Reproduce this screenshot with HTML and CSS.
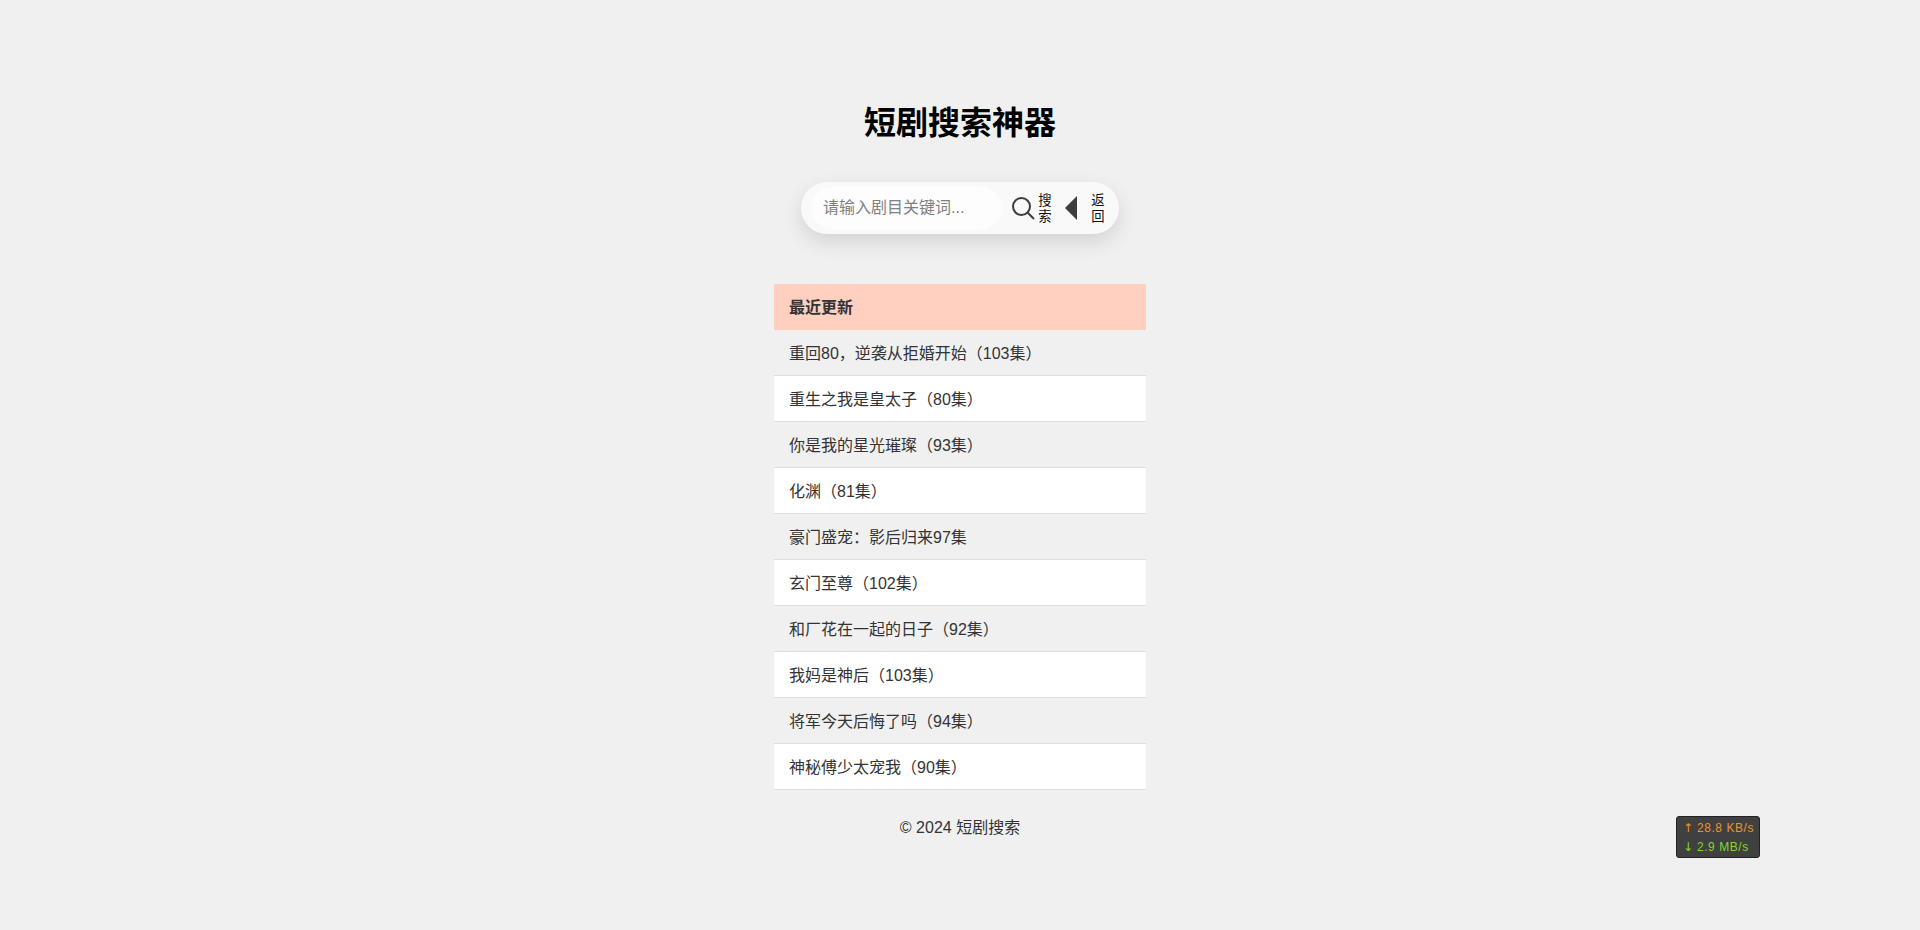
FILE: index.html
```html
<!DOCTYPE html>
<html lang="zh-CN">
<head>
<meta charset="utf-8">
<title>短剧搜索神器</title>
<link rel="stylesheet" href="styles.css">
</head>
<body>
<main class="page">
  <h1 class="title">短剧搜索神器</h1>
  <form class="search">
    <input class="search-input" type="text" placeholder="请输入剧目关键词...">
    <button class="search-btn search-btn-find" type="button">
      <svg class="icon" viewBox="0 0 24 24" width="24" height="24" fill="none" stroke="#3d3d3d" stroke-width="2"><circle cx="10.5" cy="10.5" r="8.5"/><path d="M16.8 16.8 L23 23"/></svg>
      <span class="btn-label">搜索</span>
    </button>
    <button class="search-btn search-btn-back" type="button">
      <svg class="icon" viewBox="0 0 12 24" width="12" height="24"><path d="M12 0 V24 L0 12 Z" fill="#3d3d3d"/></svg>
      <span class="btn-label">返回</span>
    </button>
  </form>
  <section class="list">
    <div class="list-head">最近更新</div>
    <ul class="rows">
      <li class="row">重回80，逆袭从拒婚开始（103集）</li>
      <li class="row">重生之我是皇太子（80集）</li>
      <li class="row">你是我的星光璀璨（93集）</li>
      <li class="row">化渊（81集）</li>
      <li class="row">豪门盛宠：影后归来97集</li>
      <li class="row">玄门至尊（102集）</li>
      <li class="row">和厂花在一起的日子（92集）</li>
      <li class="row">我妈是神后（103集）</li>
      <li class="row">将军今天后悔了吗（94集）</li>
      <li class="row">神秘傅少太宠我（90集）</li>
    </ul>
  </section>
  <footer class="foot">© 2024 短剧搜索</footer>
</main>
<aside class="speed">
  <div class="speed-up"><span class="speed-arrow">↑</span> 28.8 KB/s</div>
  <div class="speed-down"><span class="speed-arrow">↓</span> 2.9 MB/s</div>
</aside>
</body>
</html>
```
FILE: styles.css
```css
* { box-sizing: border-box; }
html, body { margin: 0; height: 100%; }
body {
  background: #f0f0f0;
  color: #333;
  font-family: "Liberation Sans", "Noto Sans CJK SC", sans-serif;
  font-size: 16px;
  overflow: hidden;
}
.page {
  width: 372px;
  margin: 0 auto;
  padding-top: 104px;
  display: flex;
  flex-direction: column;
  align-items: center;
}
.title {
  margin: 0;
  height: 38px;
  line-height: 38px;
  font-size: 32px;
  font-weight: 700;
  color: #000;
}
.search {
  margin-top: 40px;
  width: 318px;
  height: 52px;
  padding: 5px 10px;
  background: #f9f9f9;
  border-radius: 26px;
  box-shadow: 0 8px 20px rgba(0, 0, 0, 0.12);
  display: flex;
  align-items: center;
}
.search-input {
  width: 191px;
  height: 42px;
  flex: none;
  border: 0;
  outline: 0;
  padding: 0 12px;
  border-radius: 21px;
  background: #fdfdfd;
  font: inherit;
  color: #333;
}
.search-input::placeholder { color: #808080; opacity: 1; }
.search-btn {
  border: 0;
  padding: 0;
  background: none;
  display: flex;
  align-items: center;
  color: #111;
  font: 13.33px/16.5px "Liberation Sans", "Noto Sans CJK SC", sans-serif;
}
.search-btn-find { margin-left: 9px; }
.search-btn-back { margin-left: 13px; }
.icon { flex: none; display: block; }
.btn-label { width: 14px; display: block; margin-left: 3px; text-align: center; position: relative; top: 1px; }
.search-btn-back .btn-label { margin-left: 14px; }
.list {
  margin-top: 50px;
  width: 372px;
}
.list-head {
  height: 46px;
  line-height: 47px;
  padding: 0 15px;
  background: #ffcfc0;
  font-weight: 700;
}
.rows { list-style: none; margin: 0; padding: 0; }
.row {
  height: 46px;
  line-height: 47px;
  padding: 0 15px;
  border-bottom: 1px solid #ddd;
}
.row:nth-child(even) { background: #fff; }
.foot {
  margin-top: 26px;
  line-height: 24px;
  color: #333;
}
.speed {
  position: fixed;
  left: 1676px;
  top: 816px;
  width: 84px;
  height: 42px;
  padding: 2px 0 0 6px;
  background: #404040;
  border: 1px solid #222;
  border-radius: 3px;
  font-size: 12px;
  letter-spacing: 0.55px;
  line-height: 19px;
  white-space: nowrap;
}
.speed-arrow { font-family: "DejaVu Sans", sans-serif; letter-spacing: 0; }
.speed-up { color: #e8952f; }
.speed-down { color: #7fd830; }
```
